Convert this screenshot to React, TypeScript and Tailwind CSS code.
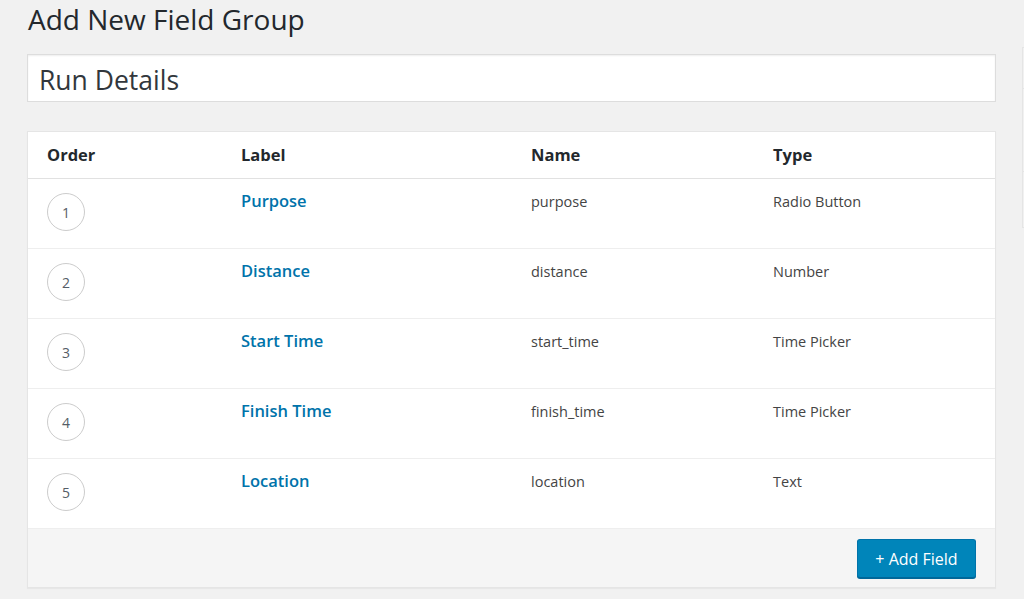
const fields = [
  { order: 1, label: 'Purpose', name: 'purpose', type: 'Radio Button' },
  { order: 2, label: 'Distance', name: 'distance', type: 'Number' },
  { order: 3, label: 'Start Time', name: 'start_time', type: 'Time Picker' },
  { order: 4, label: 'Finish Time', name: 'finish_time', type: 'Time Picker' },
  { order: 5, label: 'Location', name: 'location', type: 'Text' },
];

const cols = 'grid grid-cols-[194px_290px_242px_1fr] px-[19px]';

export default function App() {
  return (
    <div
      className="min-h-screen w-full overflow-hidden bg-[#f1f1f1] pl-[27px]"
      style={{ fontFamily: '"Open Sans", "Noto Sans", sans-serif' }}
    >
      <h1 className="text-[28px] leading-[38px] font-normal text-[#23282d] pl-px">Add New Field Group</h1>

      <div className="flex gap-[26px]">
        {/* main column */}
        <div className="w-[969px] shrink-0 pt-[16px]">
          <div className="h-[48px] border border-[#dddddd] bg-white shadow-[inset_0_1px_2px_rgba(0,0,0,0.07)] pl-[11px] pt-[3px] text-[26.5px] leading-[44px] text-[#32373c]">
            Run Details
          </div>

          <div className="mt-[29px] border border-[#e5e5e5] bg-white shadow-[0_1px_1px_rgba(0,0,0,0.04)]">
            <div className={`${cols} h-[47px] items-center border-b border-[#e1e1e1] text-[16.5px] font-bold text-[#23282d]`}>
              <div>Order</div>
              <div>Label</div>
              <div>Name</div>
              <div>Type</div>
            </div>

            {fields.map((f) => (
              <div key={f.order} className={`${cols} h-[70px] border-b border-[#eeeeee] last:border-b-[#e1e1e1] pt-[10px]`}>
                <div className="pt-[4px]">
                  <div className="flex h-[38px] w-[38px] items-center justify-center rounded-full border border-[#cccccc] text-[14px] text-[#555d66]">
                    {f.order}
                  </div>
                </div>
                <div className="text-[16.5px] leading-[24px] font-semibold text-[#0073aa]">{f.label}</div>
                <div className="pt-[2px] text-[14.5px] leading-[22px] text-[#444444]">{f.name}</div>
                <div className="pt-[2px] text-[14.5px] leading-[22px] text-[#444444]">{f.type}</div>
              </div>
            ))}

            <div className="flex justify-end bg-[#f5f5f5] pt-[10px] pb-[9px] pr-[19px]">
              <button className="h-[39px] w-[119px] rounded-[3px] border border-[#0073aa] border-b-[#006799] bg-[#0085ba] text-[16px] text-white shadow-[0_1px_0_#006799]">
                + Add Field
              </button>
            </div>
          </div>
        </div>

        {/* sidebar edge */}
        <div className="w-[280px] shrink-0 pt-[9px]">
          <div className="h-[181px] border border-[#e5e5e5]">
            <div className="h-[41px] border-b border-[#e5e5e5]" />
            <div className="h-[83px] border-b border-[#e5e5e5]" />
          </div>
        </div>
      </div>
    </div>
  );
}
